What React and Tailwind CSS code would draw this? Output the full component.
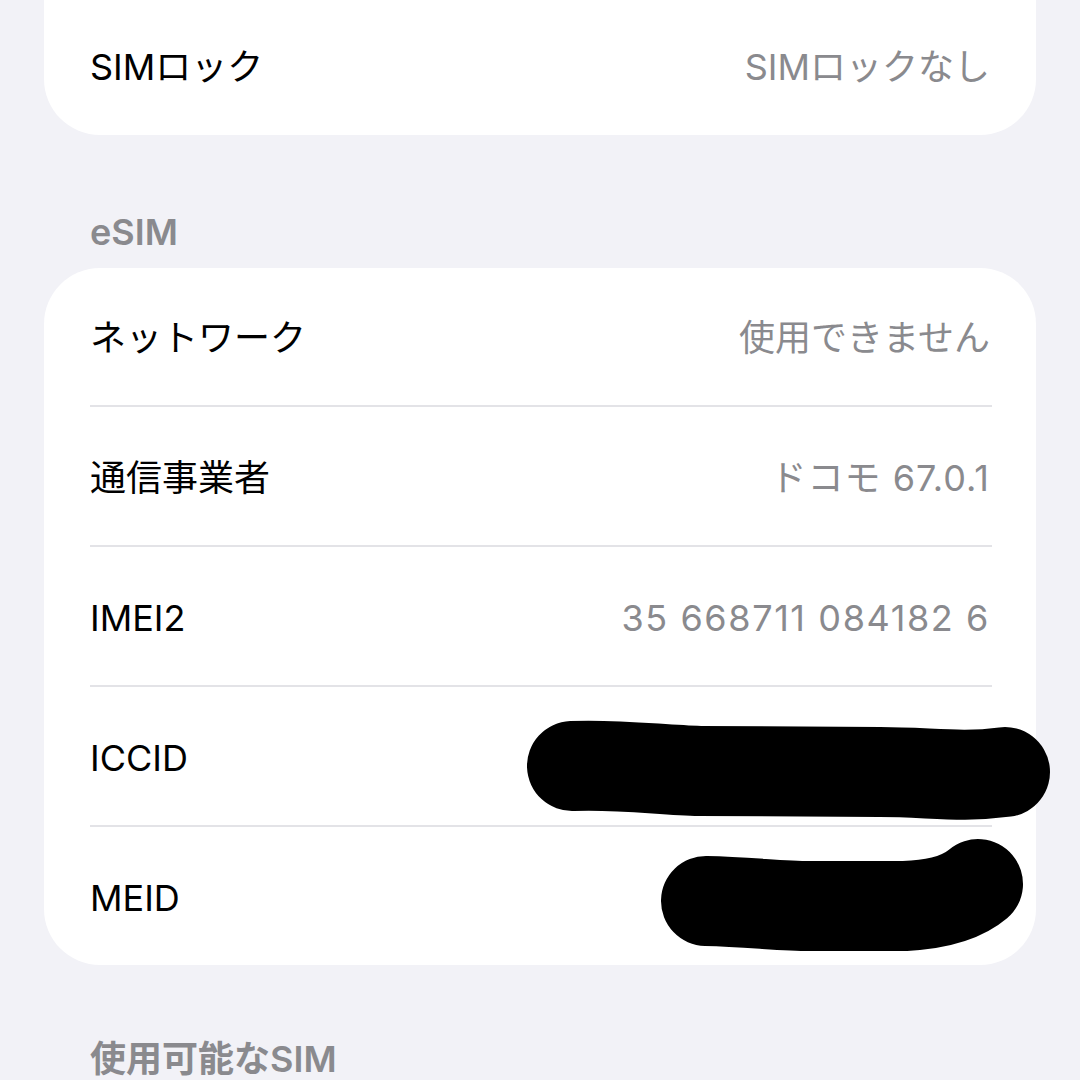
import React from "react";

const FONT = "font-['Inter','Noto_Sans_CJK_JP',sans-serif]";

const ESIM_ROWS = [
  { label: "ネットワーク", value: "使用できません" },
  { label: "通信事業者", value: "ドコモ 67.0.1", wide: "tracking-[1px]" },
  { label: "IMEI2", value: "35 668711 084182 6", wide: "tracking-[1.6px]" },
  { label: "ICCID", value: "" },
  { label: "MEID", value: "" },
];

function Row({ label, value, wide = "", className = "h-[138px]" }) {
  return (
    <div className={`flex items-center justify-between pl-[46px] pr-[46px] pt-[3px] ${className}`}>
      <span className="text-[36px] leading-[44px] text-black">{label}</span>
      <span className={`text-[36px] leading-[44px] text-[#8a8a8e] ${wide}`}>{value}</span>
    </div>
  );
}

function Header({ children, className }) {
  return (
    <div className={`px-[90px] ${className}`}>
      <p className="text-[36px] leading-[44px] font-semibold text-[#8a8a8e]">{children}</p>
    </div>
  );
}

export default function App() {
  return (
    <div className={`relative w-[1080px] h-[1080px] overflow-hidden bg-[#f2f2f7] ${FONT}`}>
      <div className="mx-[44px] -mt-[5px] bg-white rounded-b-[56px]">
        <Row label="SIMロック" value="SIMロックなし" className="h-[140px]" />
      </div>

      <Header className="pt-[75px] pb-[14px]">eSIM</Header>

      <div className="mx-[44px] bg-white rounded-[56px]">
        {ESIM_ROWS.map((r, i) => (
          <div key={r.label}>
            {i > 0 && <div className="ml-[46px] mr-[44px] h-[2px] bg-[#e3e3e7]" />}
            <Row {...r} className={i === 0 ? "h-[137px]" : "h-[138px]"} />
          </div>
        ))}
      </div>

      <Header className="pt-[72px]">使用可能なSIM</Header>

      {/* redaction scribbles */}
      <svg className="absolute inset-0 pointer-events-none" width="1080" height="1080" viewBox="0 0 1080 1080">
        <path
          d="M572 766 C620 764 660 770 700 771 L880 772 C930 772 960 778 1005 772"
          fill="none"
          stroke="#000"
          strokeWidth="90"
          strokeLinecap="round"
          strokeLinejoin="round"
        />
        <path
          d="M706 901 C750 902 780 906 810 906 L905 906 C945 904 965 895 978 884"
          fill="none"
          stroke="#000"
          strokeWidth="90"
          strokeLinecap="round"
          strokeLinejoin="round"
        />
      </svg>
    </div>
  );
}
